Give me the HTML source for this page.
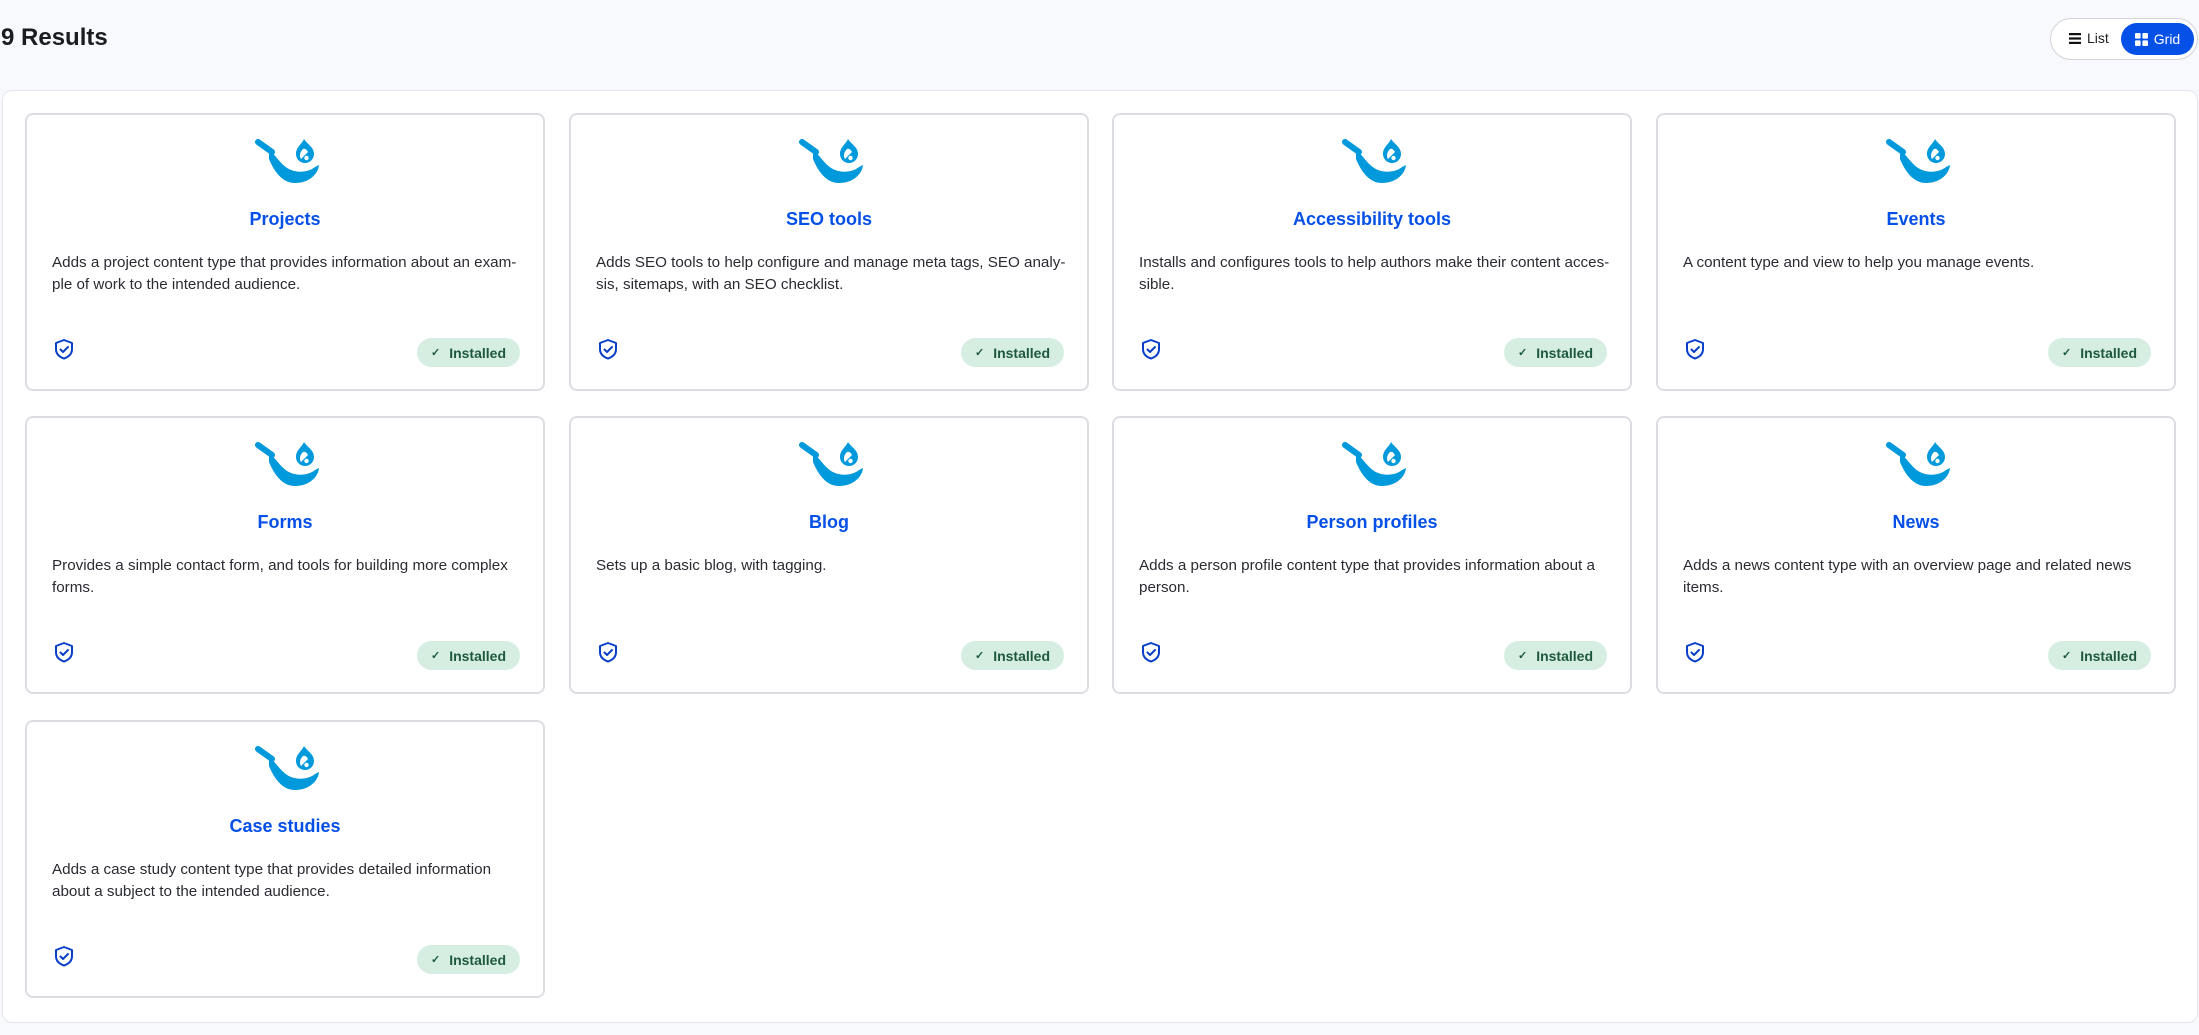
<!DOCTYPE html>
<html><head><meta charset="utf-8"><style>
*{box-sizing:border-box;margin:0;padding:0}
body{width:2199px;height:1035px;background:#f8f9fc;font-family:"Liberation Sans",sans-serif;position:relative;overflow:hidden;color:#222330}
h1{position:absolute;left:1px;top:24px;font-size:24px;font-weight:bold;color:#1b1c22}
.tog{position:absolute;left:2050px;top:18px;width:148px;height:42px;border:1px solid #d4d4d8;border-radius:21px;background:#fff}
.tog .l{position:absolute;left:18px;top:11px;font-size:14px;color:#222;display:flex;align-items:center;gap:6px}
.tog .g{position:absolute;right:3px;top:4px;width:73px;height:32px;border-radius:16px;background:#0550e6;color:#fff;font-size:14px;display:flex;align-items:center;justify-content:center;gap:6px}
.wrap{position:absolute;left:2px;top:90px;width:2196px;height:933px;background:#fff;border:1px solid #e4e5ea;border-radius:10px}
.card{position:absolute;width:520px;height:278px;border:2px solid #dcdde2;border-radius:8px;background:#fff}
.card svg.ic{position:absolute;left:228px;top:22px}
.card h2{position:absolute;left:0;right:0;top:94px;text-align:center;font-size:18px;font-weight:bold;color:#0550e6}
.card p{position:absolute;left:25px;right:10px;top:137px;font-size:15.2px;line-height:21.5px;color:#2a2b33;white-space:nowrap}
.card .sh{position:absolute;left:26px;top:223px}
.pill{position:absolute;right:23px;top:223px;height:29px;padding:0 14px 0 14px;border-radius:15px;background:#d6ede2;color:#1d5a3b;font-size:14px;font-weight:bold;display:flex;align-items:center;gap:9px}
.pill span{font-size:11px}
</style></head><body>
<h1>9 Results</h1>
<div class="tog"><div class="l"><svg width="12" height="11" viewBox="0 0 12 11"><rect y="0" width="12" height="2.2" fill="#111"/><rect y="4.4" width="12" height="2.2" fill="#111"/><rect y="8.8" width="12" height="2.2" fill="#111"/></svg>List</div>
<div class="g"><svg width="13" height="13" viewBox="0 0 13 13" fill="#fff"><rect width="5.6" height="5.6" rx="1"/><rect x="7.4" width="5.6" height="5.6" rx="1"/><rect y="7.4" width="5.6" height="5.6" rx="1"/><rect x="7.4" y="7.4" width="5.6" height="5.6" rx="1"/></svg>Grid</div></div>
<div class="wrap"></div>
<svg width="0" height="0" style="position:absolute"><defs>
<g id="pan"><path d="M3 5 L17 15" stroke="#0099dc" stroke-width="6" stroke-linecap="round"/><path d="M14 13 C22 19 26 29 36 33 C44 36 54 35 60 30 L64 28 C63 38 53 46 40 46 C27 46 19 34 14 22 Z" fill="#0099dc"/><path d="M49 2 C47 7,41 10,41 17 C41 22,45 26,50 26 C55 26,59 22,59 17 C59 10,52 7,49 2 Z" fill="#0099dc"/><path d="M48 12 C45 15,44 19,46 22 L53 15 C52 13,50 11,48 12 Z" fill="#fff"/><circle cx="51.5" cy="21" r="2.2" fill="#fff"/></g>
<g id="shd"><path d="M11 2 L19 5 L19 11 C19 16,15.5 19,11 20.5 C6.5 19,3 16,3 11 L3 5 Z" fill="none" stroke="#0a3fc9" stroke-width="2" stroke-linejoin="round"/><path d="M7.5 11.5 L10 14 L15 9" fill="none" stroke="#0a3fc9" stroke-width="2" stroke-linecap="round" stroke-linejoin="round"/></g>
</defs></svg>

<div class="card" style="left:25px;top:113px"><svg class="ic" width="66" height="46"><use href="#pan"/></svg><h2>Projects</h2><p>Adds a project content type that provides information about an exam-<br>ple of work to the intended audience.</p><svg class="sh" width="22" height="22"><use href="#shd"/></svg><div class="pill"><span>✓</span>Installed</div></div>
<div class="card" style="left:569px;top:113px"><svg class="ic" width="66" height="46"><use href="#pan"/></svg><h2>SEO tools</h2><p>Adds SEO tools to help configure and manage meta tags, SEO analy-<br>sis, sitemaps, with an SEO checklist.</p><svg class="sh" width="22" height="22"><use href="#shd"/></svg><div class="pill"><span>✓</span>Installed</div></div>
<div class="card" style="left:1112px;top:113px"><svg class="ic" width="66" height="46"><use href="#pan"/></svg><h2>Accessibility tools</h2><p>Installs and configures tools to help authors make their content acces-<br>sible.</p><svg class="sh" width="22" height="22"><use href="#shd"/></svg><div class="pill"><span>✓</span>Installed</div></div>
<div class="card" style="left:1656px;top:113px"><svg class="ic" width="66" height="46"><use href="#pan"/></svg><h2>Events</h2><p>A content type and view to help you manage events.</p><svg class="sh" width="22" height="22"><use href="#shd"/></svg><div class="pill"><span>✓</span>Installed</div></div>

<div class="card" style="left:25px;top:416px"><svg class="ic" width="66" height="46"><use href="#pan"/></svg><h2>Forms</h2><p>Provides a simple contact form, and tools for building more complex<br>forms.</p><svg class="sh" width="22" height="22"><use href="#shd"/></svg><div class="pill"><span>✓</span>Installed</div></div>
<div class="card" style="left:569px;top:416px"><svg class="ic" width="66" height="46"><use href="#pan"/></svg><h2>Blog</h2><p>Sets up a basic blog, with tagging.</p><svg class="sh" width="22" height="22"><use href="#shd"/></svg><div class="pill"><span>✓</span>Installed</div></div>
<div class="card" style="left:1112px;top:416px"><svg class="ic" width="66" height="46"><use href="#pan"/></svg><h2>Person profiles</h2><p>Adds a person profile content type that provides information about a<br>person.</p><svg class="sh" width="22" height="22"><use href="#shd"/></svg><div class="pill"><span>✓</span>Installed</div></div>
<div class="card" style="left:1656px;top:416px"><svg class="ic" width="66" height="46"><use href="#pan"/></svg><h2>News</h2><p>Adds a news content type with an overview page and related news<br>items.</p><svg class="sh" width="22" height="22"><use href="#shd"/></svg><div class="pill"><span>✓</span>Installed</div></div>

<div class="card" style="left:25px;top:720px"><svg class="ic" width="66" height="46"><use href="#pan"/></svg><h2>Case studies</h2><p>Adds a case study content type that provides detailed information<br>about a subject to the intended audience.</p><svg class="sh" width="22" height="22"><use href="#shd"/></svg><div class="pill"><span>✓</span>Installed</div></div>
</body></html>
